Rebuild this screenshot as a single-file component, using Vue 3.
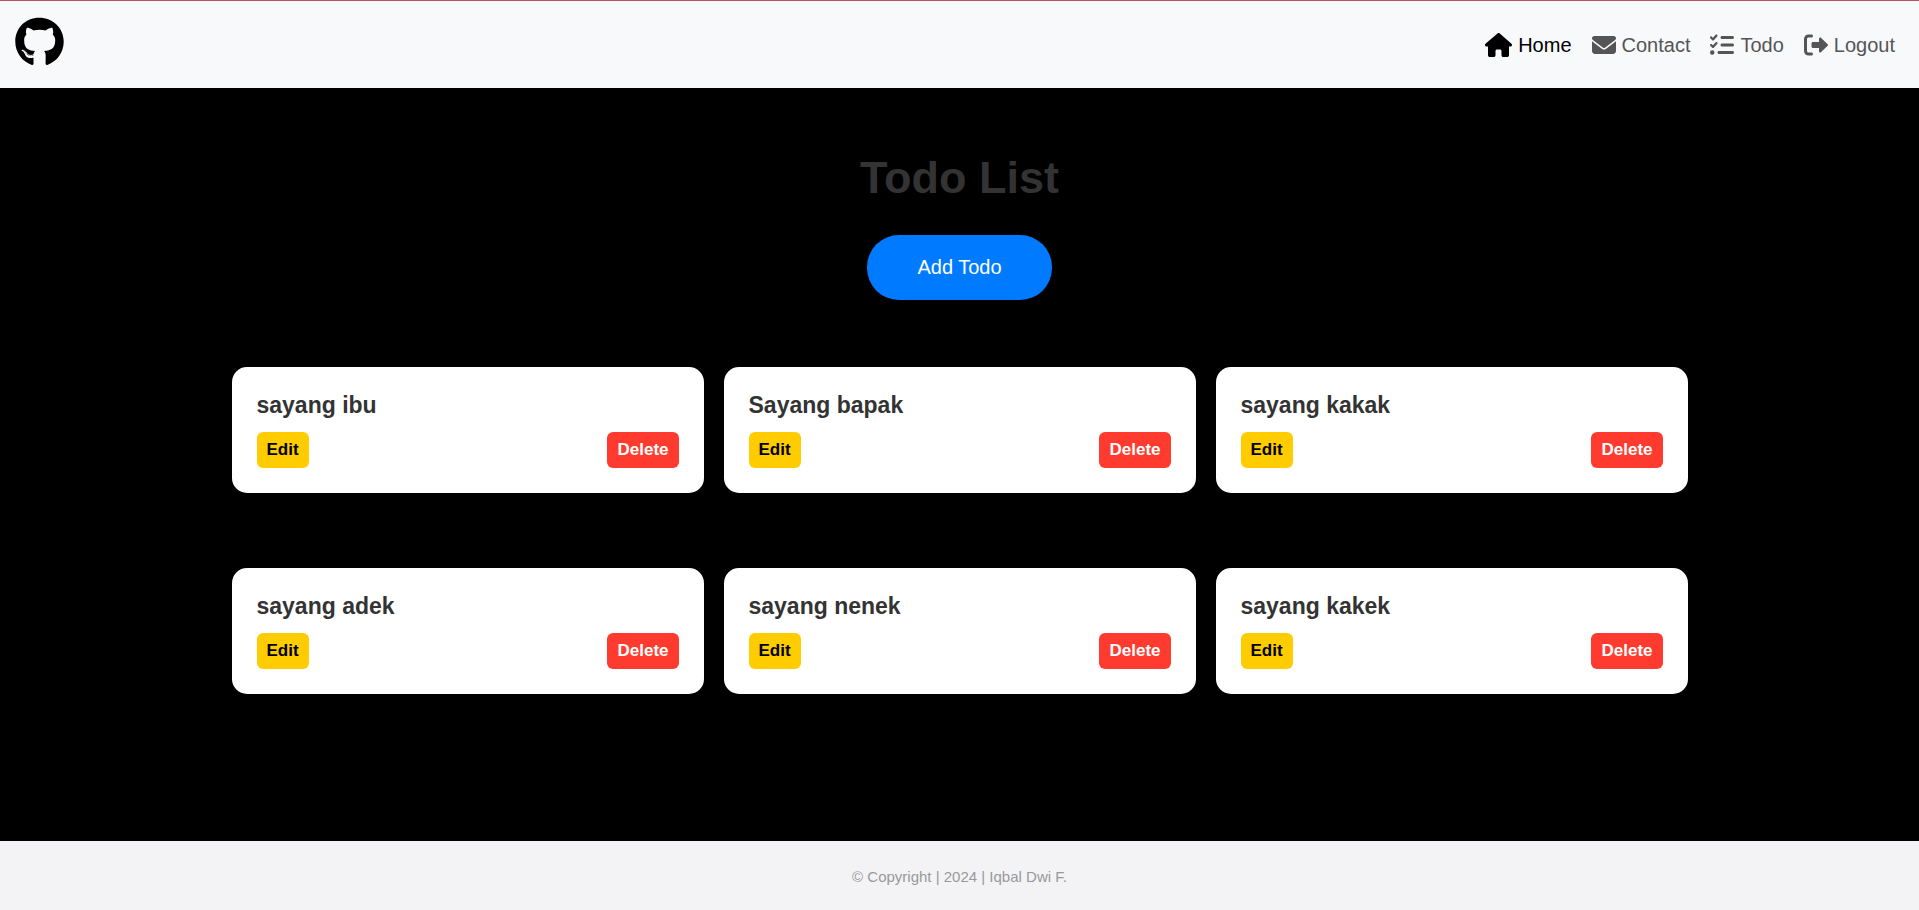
<script setup>
import { ref } from 'vue'

const links = [
  {
    label: 'Home',
    box: '0 0 576 512',
    wide: true,
    path: 'M575.8 255.5c0 18-15 32.1-32 32.1h-32l.7 160.2c0 2.700-.2 5.400-.5 8.100V472c0 22.100-17.900 40-40 40H456c-1.100 0-2.200 0-3.300-.1c-1.400 .1-2.800 .1-4.200 .1H416 392c-22.100 0-40-17.900-40-40V448 384c0-17.700-14.300-32-32-32H256c-17.700 0-32 14.300-32 32v64 24c0 22.100-17.900 40-40 40H160 128.100c-1.500 0-3-.1-4.500-.2c-1.200 .1-2.400 .2-3.600 .2H104c-22.100 0-40-17.900-40-40V360c0-.9 0-1.900 .1-2.800V287.600H32c-18 0-32-14-32-32.100c0-9 3-17 10-24L266.400 8c7-7 15-8 22-8s15 2 21 7L564.800 231.500c8 7 12 15 11 24z'
  },
  {
    label: 'Contact',
    box: '0 0 512 512',
    path: 'M48 64C21.5 64 0 85.5 0 112c0 15.100 7.100 29.300 19.200 38.400L236.800 313.600c11.400 8.500 27 8.500 38.400 0L492.800 150.400c12.100-9.100 19.200-23.300 19.200-38.400c0-26.500-21.500-48-48-48H48zM0 176V384c0 35.300 28.700 64 64 64H448c35.300 0 64-28.700 64-64V176L294.400 339.200c-22.800 17.100-54 17.100-76.800 0L0 176z'
  },
  {
    label: 'Todo',
    box: '0 0 512 512',
    path: 'M152.100 38.200c9.900 8.900 10.700 24 1.800 33.900l-72 80c-4.400 4.900-10.600 7.800-17.200 7.900s-12.900-2.400-17.600-7L7 113C-2.300 103.600-2.300 88.400 7 79s24.600-9.400 33.900 0l22.100 22.100 55.100-61.200c8.900-9.900 24-10.700 33.900-1.800zm0 160c9.900 8.900 10.700 24 1.800 33.900l-72 80c-4.400 4.900-10.600 7.800-17.200 7.900s-12.900-2.400-17.600-7L7 273c-9.400-9.400-9.400-24.600 0-33.900s24.600-9.400 33.900 0l22.100 22.100 55.100-61.200c8.900-9.900 24-10.700 33.900-1.800zM224 96c0-17.700 14.300-32 32-32H480c17.700 0 32 14.300 32 32s-14.300 32-32 32H256c-17.700 0-32-14.300-32-32zm0 160c0-17.700 14.300-32 32-32H480c17.700 0 32 14.300 32 32s-14.300 32-32 32H256c-17.700 0-32-14.300-32-32zM160 416c0-17.700 14.300-32 32-32H480c17.700 0 32 14.300 32 32s-14.300 32-32 32H192c-17.700 0-32-14.300-32-32zM48 368a48 48 0 1 1 0 96 48 48 0 1 1 0-96z'
  },
  {
    label: 'Logout',
    box: '0 0 512 512',
    path: 'M160 96c17.700 0 32-14.300 32-32s-14.300-32-32-32H96C43 32 0 75 0 128V384c0 53 43 96 96 96h64c17.700 0 32-14.300 32-32s-14.300-32-32-32H96c-17.700 0-32-14.300-32-32V128c0-17.700 14.300-32 32-32h64zM504.500 273.400c4.800-4.500 7.500-10.800 7.500-17.400s-2.700-12.900-7.500-17.400l-144-136c-7-6.600-17.200-8.400-26-4.600s-14.500 12.400-14.500 22v72H192c-17.700 0-32 14.300-32 32v64c0 17.700 14.300 32 32 32H320v72c0 9.600 5.700 18.200 14.500 22s19 2 26-4.600l144-136z'
  }
]
const active = ref('Home')
const todos = ref(['sayang ibu', 'Sayang bapak', 'sayang kakak', 'sayang adek', 'sayang nenek', 'sayang kakek'])
</script>

<template>
  <div class="page">
    <header class="navbar">
      <a class="brand" href="#" aria-label="GitHub">
        <svg viewBox="0 0 496 512" aria-hidden="true">
          <path d="M165.900 397.400c0 2-2.300 3.600-5.200 3.600-3.300.3-5.600-1.300-5.600-3.600 0-2 2.300-3.600 5.200-3.600 3-.3 5.600 1.300 5.600 3.600zm-31.100-4.500c-.7 2 1.300 4.300 4.300 4.900 2.600 1 5.600 0 6.200-2s-1.300-4.300-4.300-5.200c-2.600-.7-5.500.3-6.200 2.300zm44.200-1.700c-2.900.7-4.900 2.600-4.600 4.900.3 2 2.900 3.300 5.900 2.600 2.900-.7 4.900-2.600 4.600-4.600-.3-1.900-3-3.200-5.900-2.900zM244.800 8C106.100 8 0 113.300 0 252c0 110.900 69.800 205.800 169.500 239.200 12.800 2.300 17.300-5.600 17.300-12.100 0-6.200-.3-40.400-.3-61.400 0 0-70 15-84.700-29.800 0 0-11.400-29.100-27.800-36.600 0 0-22.900-15.700 1.600-15.400 0 0 24.900 2 38.600 25.800 21.900 38.600 58.600 27.500 72.900 20.900 2.300-16 8.800-27.100 16-33.700-55.900-6.200-112.300-14.300-112.300-110.500 0-27.500 7.600-41.300 23.600-58.900-2.600-6.500-11.100-33.300 2.600-67.900 20.900-6.500 69 27 69 27 20-5.600 41.500-8.500 62.800-8.500s42.800 2.900 62.800 8.500c0 0 48.100-33.600 69-27 13.700 34.700 5.200 61.400 2.600 67.900 16 17.700 25.800 31.500 25.800 58.900 0 96.500-58.900 104.200-114.800 110.500 9.200 7.900 17 22.900 17 46.400 0 33.700-.3 75.400-.3 83.600 0 6.500 4.600 14.400 17.300 12.100C428.200 457.800 496 362.900 496 252 496 113.300 383.500 8 244.800 8zM97.200 352.900c-1.300 1-1 3.300.7 5.200 1.600 1.600 3.900 2.300 5.200 1 1.300-1 1-3.300-.7-5.200-1.600-1.600-3.900-2.300-5.200-1zm-10.800-8.100c-.7 1.300.3 2.900 2.300 3.900 1.600 1 3.600.7 4.300-.7.7-1.300-.3-2.900-2.300-3.900-2-.6-3.600-.3-4.300.7zm32.400 35.600c-1.600 1.300-1 4.300 1.300 6.200 2.300 2.300 5.200 2.600 6.500 1 1.300-1.300.7-4.300-1.300-6.200-2.200-2.300-5.200-2.600-6.500-1zm-11.400-14.700c-1.600 1-1.600 3.600 0 5.900 1.600 2.300 4.300 3.300 5.600 2.300 1.600-1.300 1.600-3.900 0-6.200-1.400-2.300-4-3.300-5.600-2z" />
        </svg>
      </a>
      <nav class="links">
        <a
          v-for="link in links"
          :key="link.label"
          href="#"
          class="link"
          :class="{ active: link.label === active }"
          @click.prevent="active = link.label"
        >
          <svg class="icon" :class="{ wide: link.wide }" :viewBox="link.box" aria-hidden="true"><path :d="link.path" /></svg>
          <span>{{ link.label }}</span>
        </a>
      </nav>
    </header>

    <main class="content">
      <h1>Todo List</h1>
      <button class="add" type="button">Add Todo</button>
      <ul class="grid">
        <li v-for="todo in todos" :key="todo" class="card">
          <h2>{{ todo }}</h2>
          <div class="actions">
            <button class="action edit" type="button">Edit</button>
            <button class="action delete" type="button">Delete</button>
          </div>
        </li>
      </ul>
    </main>

    <footer class="footer">© Copyright | 2024 | Iqbal Dwi F.</footer>
  </div>
</template>

<style>
body {
  margin: 0;
  background: #000;
}
</style>

<style scoped>
.page {
  display: flex;
  flex-direction: column;
  min-height: 100vh;
  box-sizing: border-box;
  border-top: 1px solid #bd5560;
  background: #000;
  font-family: "Liberation Sans", Arial, sans-serif;
}
.navbar {
  display: flex;
  align-items: center;
  justify-content: space-between;
  padding: 16px 24px 21px 15px;
  background: #f8f9fb;
}
.brand {
  display: flex;
  color: #000;
}
.brand svg {
  width: 49px;
  height: 50px;
  fill: currentColor;
}
.links {
  display: flex;
  gap: 20px;
  padding-top: 6px;
}
.link {
  display: flex;
  align-items: center;
  gap: 6px;
  color: #555;
  font-size: 20px;
  line-height: 24px;
  text-decoration: none;
}
.link.active {
  color: #000;
}
.icon {
  width: 24px;
  height: 24px;
  fill: currentColor;
}
.icon.wide {
  width: 27px;
}
.content {
  display: flex;
  flex: 1;
  flex-direction: column;
  align-items: center;
  padding: 64px 20px;
}
h1 {
  margin: 0 0 31px;
  color: #333;
  font-size: 45px;
  line-height: 52px;
}
.add {
  padding: 20px 50px;
  border: 0;
  border-radius: 32px;
  background: #007bff;
  color: #fff;
  font-family: inherit;
  font-size: 20px;
  line-height: 25px;
}
.grid {
  display: grid;
  grid-template-columns: repeat(3, 1fr);
  gap: 75px 20px;
  width: 100%;
  max-width: 1456px;
  margin: 67px 0 0;
  padding: 0;
  list-style: none;
}
.card {
  padding: 25px;
  border-radius: 15px;
  background: #fff;
}
h2 {
  margin: 0 0 14px;
  color: #333;
  font-size: 23px;
  line-height: 26px;
}
.actions {
  display: flex;
  justify-content: space-between;
}
.action {
  padding: 8px 10px;
  border: 0;
  border-radius: 6px;
  font-family: inherit;
  font-size: 17px;
  font-weight: 700;
  line-height: 20px;
}
.edit {
  background: #ffcc00;
  color: #000;
}
.delete {
  background: #ff3b30;
  color: #fff;
}
.footer {
  padding: 26px 24px 24px;
  background: #f3f3f6;
  color: #999;
  font-size: 15px;
  line-height: 19px;
  text-align: center;
}
</style>
